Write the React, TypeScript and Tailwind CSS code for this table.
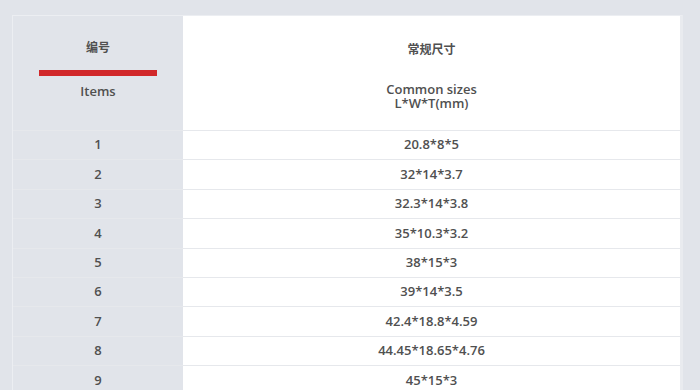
const rows = [
  ["1", "20.8*8*5"],
  ["2", "32*14*3.7"],
  ["3", "32.3*14*3.8"],
  ["4", "35*10.3*3.2"],
  ["5", "38*15*3"],
  ["6", "39*14*3.5"],
  ["7", "42.4*18.8*4.59"],
  ["8", "44.45*18.65*4.76"],
  ["9", "45*15*3"],
];

export default function App() {
  return (
    <div
      className="h-[390px] w-[700px] overflow-hidden bg-[#e1e4ea] pl-[12px] pr-[17px] pt-[15px] text-[13px] font-semibold text-[#505050]"
      style={{ fontFamily: '"Open Sans", "Noto Sans CJK SC", sans-serif' }}
    >
      <div className="border-l border-t border-r-[3px] border-[#eceef2] border-r-[#e9ebef]">
        <div className="flex h-[114px]">
          <div className="flex w-[170px] shrink-0 flex-col items-center bg-[#e1e4ea]">
            <div className="mt-[23px] text-[12px] font-bold leading-[18px]">编号</div>
            <div className="mt-[13px] h-[6px] w-[118px] bg-[#d1282a]" />
            <div className="mt-[6px] leading-[18px]">Items</div>
          </div>
          <div className="flex flex-1 flex-col items-center bg-white">
            <div className="mt-[25px] text-[12px] font-bold leading-[18px]">常规尺寸</div>
            <div className="mt-[23px] text-center leading-[14px]">
              <div>Common sizes</div>
              <div>L*W*T(mm)</div>
            </div>
          </div>
        </div>
        {rows.map(([n, size]) => (
          <div key={n} className="flex h-[29.4px] border-t border-[#e6e8ec]">
            <div className="flex w-[170px] shrink-0 items-center justify-center bg-[#e1e4ea]">
              {n}
            </div>
            <div className="flex flex-1 items-center justify-center bg-white">
              {size}
            </div>
          </div>
        ))}
      </div>
    </div>
  );
}
